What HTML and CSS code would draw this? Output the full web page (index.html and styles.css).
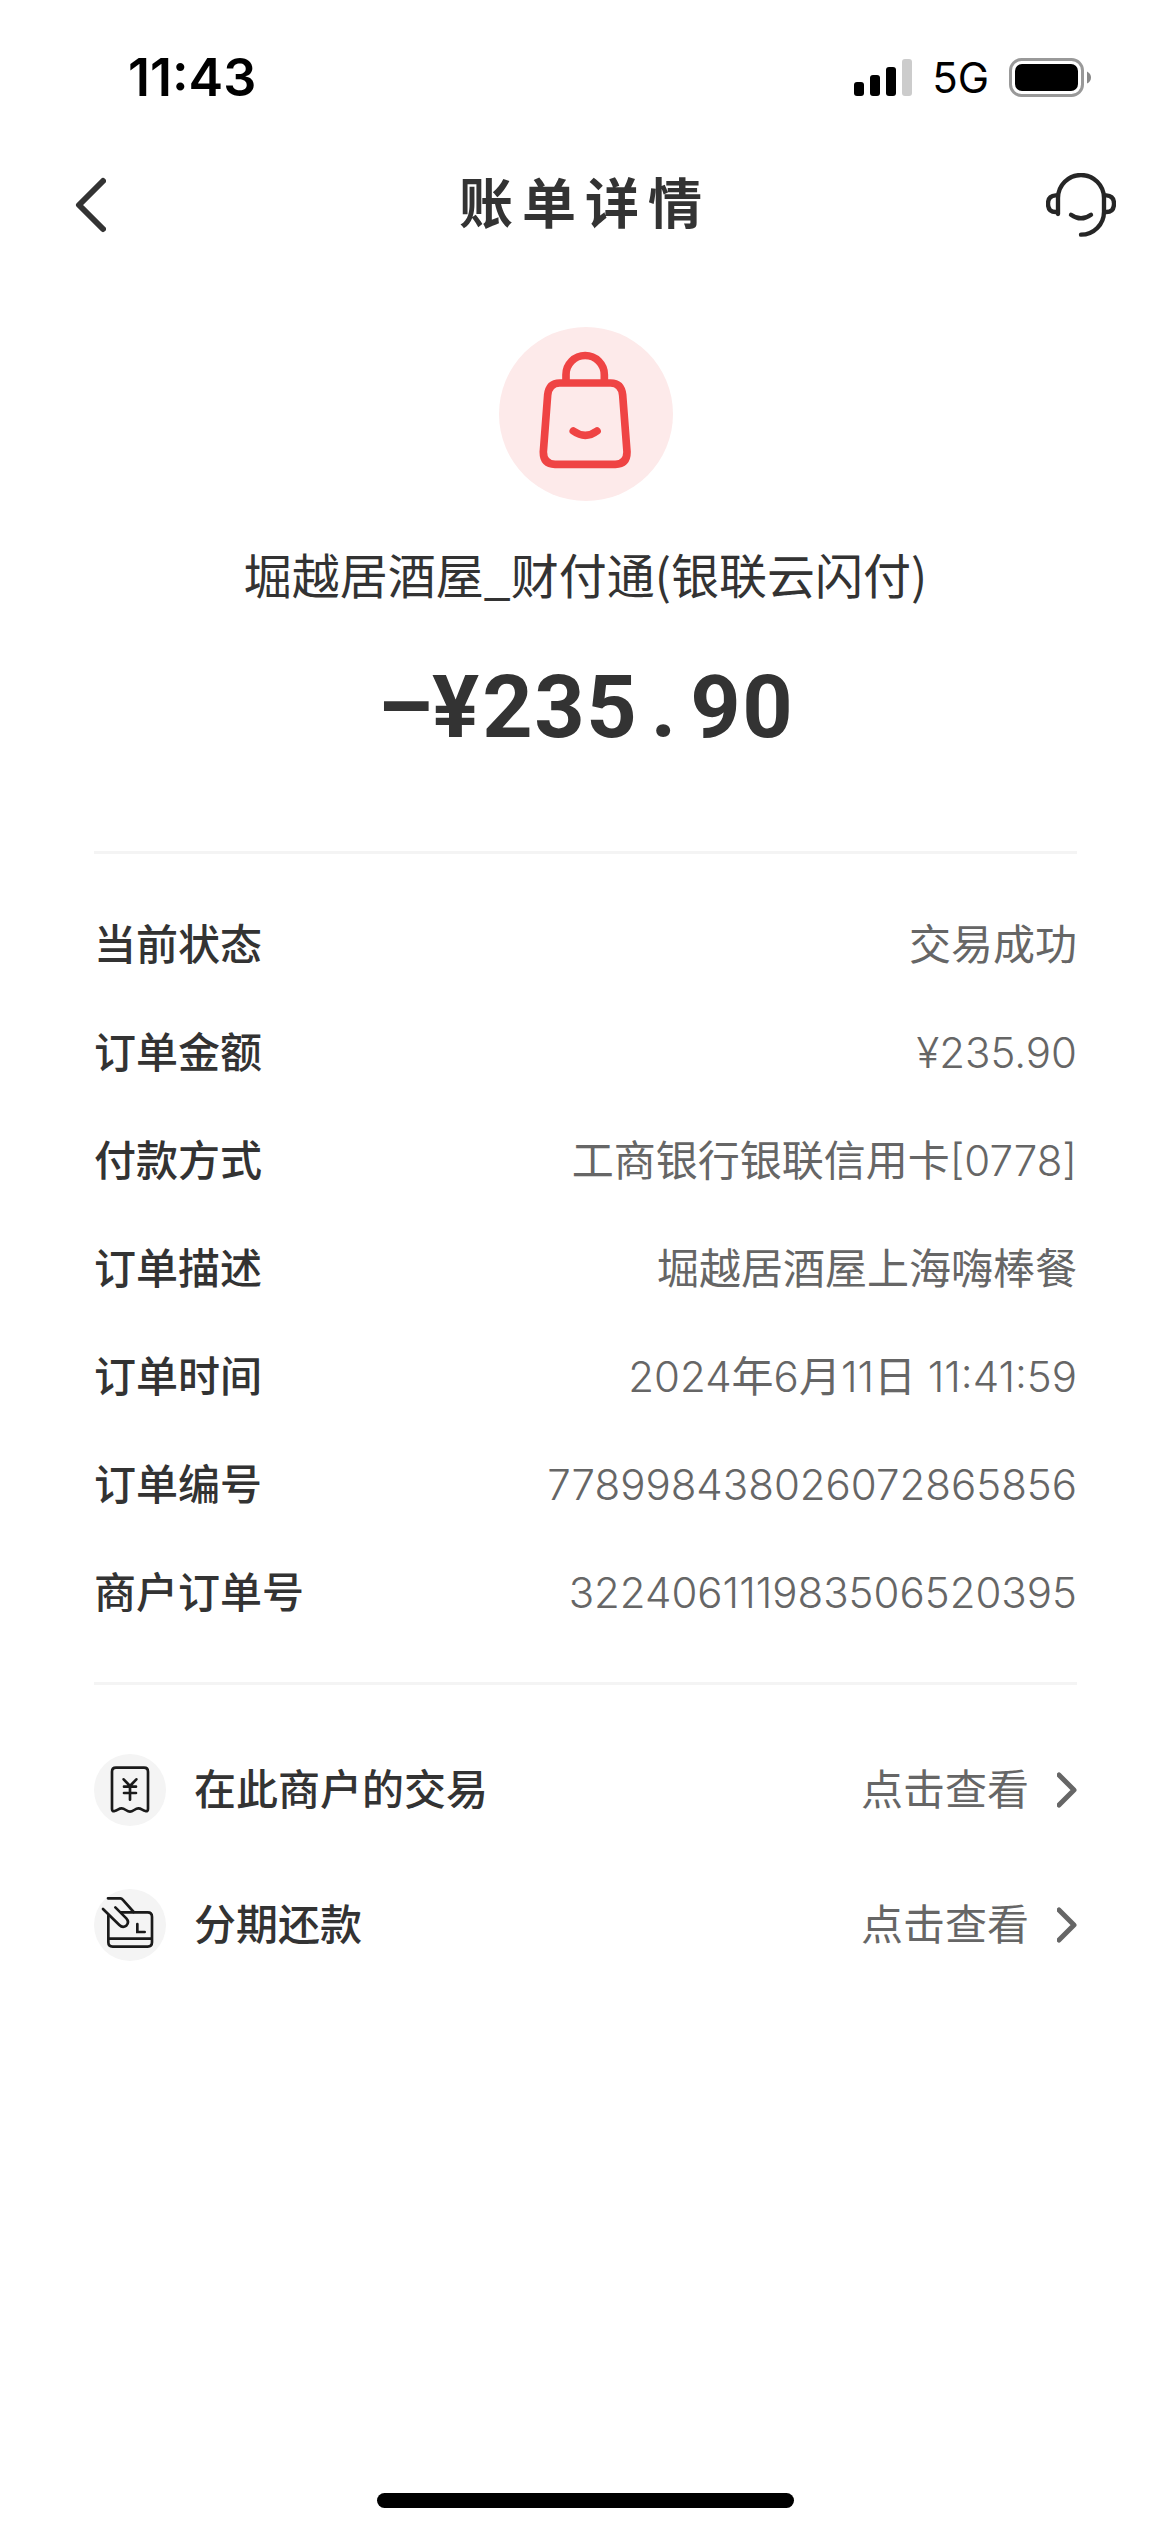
FILE: index.html
```
<!DOCTYPE html>
<html lang="zh-CN">
<head>
  <meta charset="UTF-8">
  <meta name="viewport" content="width=device-width">
  <title>账单详情</title>
  <link rel="stylesheet" href="styles.css">
</head>
<body>
  <div class="status-bar">
    <span class="time">11:43</span>
    <div class="status-icons">
      <svg class="signal" width="58" height="38" viewBox="0 0 58 38">
        <rect x="0" y="23" width="10" height="14" rx="3"/>
        <rect x="16" y="16" width="10" height="21" rx="3"/>
        <rect x="32" y="8" width="10" height="29" rx="3"/>
        <rect x="48" y="0" width="10" height="37" rx="3" fill="#ccc"/>
      </svg>
      <span class="network">5G</span>
      <svg class="battery" width="83" height="40" viewBox="0 0 83 40">
        <rect x="1.5" y="1.5" width="72" height="36" rx="11" fill="none" stroke="#999" stroke-width="3"/>
        <rect x="6" y="6" width="63" height="27" rx="7"/>
        <path d="M78 13.5 q4 2 4 6 t-4 6 z" fill="#888"/>
      </svg>
    </div>
  </div>

  <header class="nav">
    <button class="nav-btn back" aria-label="返回">
      <svg width="32" height="56" viewBox="0 0 32 56">
        <path d="M29 4 L5 28 L29 52" fill="none" stroke="#333" stroke-width="6" stroke-linecap="round" stroke-linejoin="round"/>
      </svg>
    </button>
    <h1>账单详情</h1>
    <button class="nav-btn" aria-label="客服">
      <svg width="70" height="64" viewBox="5 5 210 192" fill="none" stroke="#262626" stroke-width="13" stroke-linecap="round">
        <path d="M41 128 V80 A69 69 0 0 1 179 80 V121 A69 69 0 0 1 110 190"/>
        <path d="M41 72 H34 Q11 73 11 97 Q11 122 34 122 H41" stroke-linecap="butt"/>
        <path d="M179 72 H186 Q209 73 209 97 Q209 122 186 122 H179" stroke-linecap="butt"/>
        <path d="M80 130 Q110 152 140 130"/>
      </svg>
    </button>
  </header>

  <main>
    <section class="summary">
      <svg class="shop-icon" width="174" height="174" viewBox="0 0 522 522" fill="none" stroke="#ef4444" stroke-width="23">
        <circle cx="261" cy="261" r="261" fill="#fdeaea" stroke="none"/>
        <path d="M201 168 V143 A57 57 0 0 1 316 143 V168"/>
        <path d="M182 168 H335 Q367 168 371 204 L384 375 Q384 411 349 412 H168 Q133 411 133 375 L146 204 Q150 168 182 168 Z"/>
        <path d="M223 312 Q259 338 294 312" stroke-linecap="round"/>
      </svg>
      <p class="merchant">堀越居酒屋_财付通(银联云闪付)</p>
      <p class="amount"><span>–</span><span>¥</span><span>2</span><span>3</span><span>5</span><span>.</span><span>9</span><span>0</span></p>
    </section>

    <dl class="details">
      <div class="row"><dt>当前状态</dt><dd>交易成功</dd></div>
      <div class="row"><dt>订单金额</dt><dd class="number">¥235.90</dd></div>
      <div class="row"><dt>付款方式</dt><dd>工商银行银联信用卡<span class="number">[0778]</span></dd></div>
      <div class="row"><dt>订单描述</dt><dd>堀越居酒屋上海嗨棒餐</dd></div>
      <div class="row"><dt>订单时间</dt><dd><span class="number">2024</span>年<span class="number">6</span>月<span class="number">11</span>日 <span class="number">11:41:59</span></dd></div>
      <div class="row"><dt>订单编号</dt><dd class="number">778998438026072865856</dd></div>
      <div class="row"><dt>商户订单号</dt><dd class="number">322406111983506520395</dd></div>
    </dl>

    <nav class="links">
      <a class="link" href="#">
        <svg class="link-icon" width="72" height="72" viewBox="0 0 216 216" fill="none" stroke="#1a1a1a" stroke-width="8" stroke-linecap="round" stroke-linejoin="round">
          <circle cx="108" cy="108" r="108" fill="#f4f4f4" stroke="none"/>
          <path d="M54 165 V53 Q54 41 66 41 H150 Q162 41 162 53 V165 Q162 173 154 171 C145 169 142 163 133 163 C123 163 118 173 108 173 C98 173 93 163 83 163 C74 163 71 169 62 171 Q54 173 54 165 Z"/>
          <path d="M89 76 L108 96 L127 76 M90 98 H126 M90 117 H126 M108 96 V137"/>
        </svg>
        <span class="link-name">在此商户的交易</span>
        <span class="link-action">点击查看</span>
        <svg width="20" height="36" viewBox="0 0 20 36"><path class="chevron" d="M2 3 L17 18 L2 33"/></svg>
      </a>
      <a class="link" href="#">
        <svg class="link-icon" width="72" height="72" viewBox="0 0 216 216" fill="none" stroke="#1a1a1a" stroke-width="8" stroke-linecap="round" stroke-linejoin="round">
          <circle cx="108" cy="108" r="108" fill="#f4f4f4" stroke="none"/>
          <path d="M43 80 V160 Q43 173 56 173 H161 Q174 173 174 160 V83 Q174 70 161 70 H82 M43 149 H174"/>
          <path d="M42 28 H79 Q83 28 86 32 L119 69"/>
          <path d="M27 60 L76 108 Q86 118 97 110 Q107 99 97 88 L64 55"/>
          <path d="M130 105 V129 H152" stroke-linejoin="miter"/>
        </svg>
        <span class="link-name">分期还款</span>
        <span class="link-action">点击查看</span>
        <svg width="20" height="36" viewBox="0 0 20 36"><path class="chevron" d="M2 3 L17 18 L2 33"/></svg>
      </a>
    </nav>
  </main>

  <div class="home-indicator"></div>
</body>
</html>
```
FILE: styles.css
```
* {
  box-sizing: border-box;
}

body {
  display: flex;
  flex-direction: column;
  min-height: 100vh;
  margin: 0;
  background-color: #fff;
  color: #333;
  font-family: Inter, "Noto Sans CJK SC", sans-serif;
  font-size: 42px;
  line-height: 60px;
}

h1, p, dl, dd {
  margin: 0;
}

.status-bar {
  display: flex;
  justify-content: space-between;
  align-items: center;
  height: 156px;
  padding: 0 78px 0 128px;
  color: #000;
}

.time {
  font-size: 52px;
  font-weight: 600;
}

.status-icons {
  display: flex;
  align-items: center;
  gap: 20px;
}

.network {
  font-size: 42px;
}

.nav {
  display: flex;
  justify-content: space-between;
  align-items: center;
  height: 98px;
  padding: 0 54px;
}

.nav-btn {
  display: flex;
  align-items: center;
  width: 70px;
  padding: 0;
  border: none;
  background: none;
}

.back {
  padding-left: 20px;
}

.nav h1 {
  font-size: 54px;
  font-weight: 700;
  line-height: 80px;
  letter-spacing: 9px;
}

main {
  padding: 73px 93px 0 94px;
}

.summary {
  display: flex;
  flex-direction: column;
  align-items: center;
  padding-bottom: 94px;
  border-bottom: 3px solid #f4f4f4;
}

.merchant {
  margin-top: 36px;
  font-family: "Noto Sans CJK SC", sans-serif;
  font-size: 48px;
  line-height: 72px;
}

.amount {
  display: flex;
  margin-top: 48px;
  font-family: Roboto, sans-serif;
  font-size: 88px;
  font-weight: 700;
  line-height: 100px;
}

/* every character takes the same width */
.amount span {
  width: 52px;
  text-align: center;
}

.details {
  padding: 37px 0 35px;
  border-bottom: 3px solid #f4f4f4;
}

.row {
  display: flex;
  justify-content: space-between;
  align-items: center;
  height: 108px;
}

dt {
  font-weight: 500;
}

dd {
  color: #666;
}

.number {
  font-weight: 300;
}

.links {
  padding-top: 37px;
}

.link {
  display: flex;
  align-items: center;
  height: 135px;
  color: #333;
  text-decoration: none;
}

.link-name {
  margin-left: 28px;
  font-weight: 500;
}

.link-action {
  margin-left: auto;
  margin-right: 28px;
  color: #666;
}

.chevron {
  fill: none;
  stroke: #666;
  stroke-width: 5;
  stroke-linecap: round;
  stroke-linejoin: round;
}

.home-indicator {
  width: 417px;
  height: 15px;
  margin: auto auto 24px;
  border-radius: 8px;
  background-color: #000;
}
```
